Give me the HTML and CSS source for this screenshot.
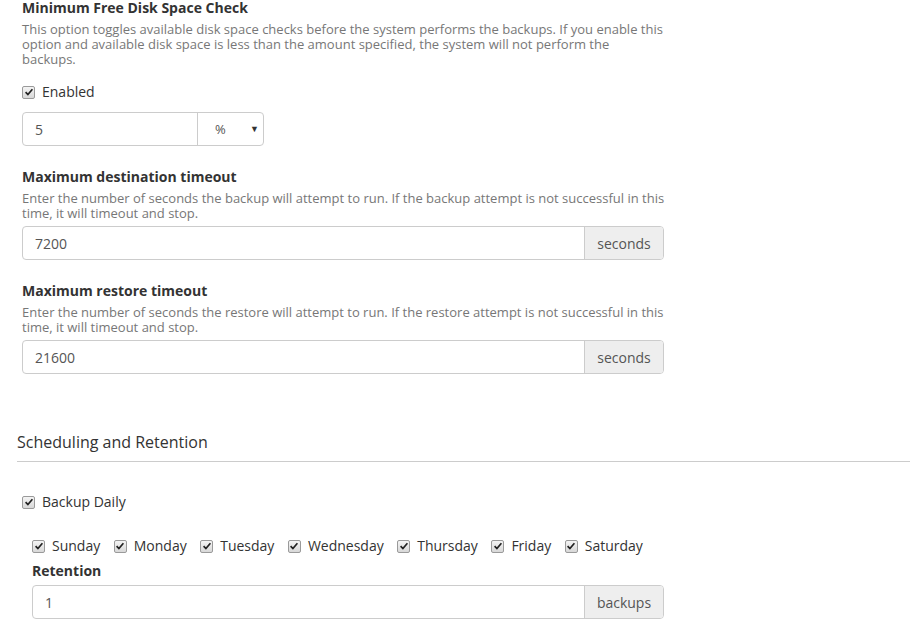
FILE: index.html
```html
<!DOCTYPE html>
<html>
<head>
<meta charset="utf-8">
<link rel="stylesheet" href="styles.css">
</head>
<body>
<div class="page">
  <div class="field">
    <div class="field-title">Minimum Free Disk Space Check</div>
    <div class="field-desc">This option toggles available disk space checks before the system performs the backups. If you enable this option and available disk space is less than the amount specified, the system will not perform the backups.</div>
    <label class="check check-enabled"><span class="box"><svg viewBox="0 0 12 12" width="12" height="12"><path d="M2.6 6.2 L4.9 8.6 L9.4 3.2" fill="none" stroke="#222" stroke-width="1.7"/></svg></span><span>Enabled</span></label>
    <div class="input-group small-group">
      <div class="input grow">5</div>
      <div class="select">%<span class="caret">&#9660;</span></div>
    </div>
  </div>

  <div class="field">
    <div class="field-title">Maximum destination timeout</div>
    <div class="field-desc">Enter the number of seconds the backup will attempt to run. If the backup attempt is not successful in this time, it will timeout and stop.</div>
    <div class="input-group">
      <div class="input grow">7200</div>
      <div class="addon">seconds</div>
    </div>
  </div>

  <div class="field">
    <div class="field-title">Maximum restore timeout</div>
    <div class="field-desc">Enter the number of seconds the restore will attempt to run. If the restore attempt is not successful in this time, it will timeout and stop.</div>
    <div class="input-group">
      <div class="input grow">21600</div>
      <div class="addon">seconds</div>
    </div>
  </div>

  <div class="section">
    <div class="section-title">Scheduling and Retention</div>
    <div class="section-body">
      <label class="check check-daily"><span class="box"><svg viewBox="0 0 12 12" width="12" height="12"><path d="M2.6 6.2 L4.9 8.6 L9.4 3.2" fill="none" stroke="#222" stroke-width="1.7"/></svg></span><span>Backup Daily</span></label>
      <div class="daily">
        <div class="days">
          <label class="check"><span class="box"><svg viewBox="0 0 12 12" width="12" height="12"><path d="M2.6 6.2 L4.9 8.6 L9.4 3.2" fill="none" stroke="#222" stroke-width="1.7"/></svg></span><span>Sunday</span></label>
          <label class="check"><span class="box"><svg viewBox="0 0 12 12" width="12" height="12"><path d="M2.6 6.2 L4.9 8.6 L9.4 3.2" fill="none" stroke="#222" stroke-width="1.7"/></svg></span><span>Monday</span></label>
          <label class="check"><span class="box"><svg viewBox="0 0 12 12" width="12" height="12"><path d="M2.6 6.2 L4.9 8.6 L9.4 3.2" fill="none" stroke="#222" stroke-width="1.7"/></svg></span><span>Tuesday</span></label>
          <label class="check"><span class="box"><svg viewBox="0 0 12 12" width="12" height="12"><path d="M2.6 6.2 L4.9 8.6 L9.4 3.2" fill="none" stroke="#222" stroke-width="1.7"/></svg></span><span>Wednesday</span></label>
          <label class="check"><span class="box"><svg viewBox="0 0 12 12" width="12" height="12"><path d="M2.6 6.2 L4.9 8.6 L9.4 3.2" fill="none" stroke="#222" stroke-width="1.7"/></svg></span><span>Thursday</span></label>
          <label class="check"><span class="box"><svg viewBox="0 0 12 12" width="12" height="12"><path d="M2.6 6.2 L4.9 8.6 L9.4 3.2" fill="none" stroke="#222" stroke-width="1.7"/></svg></span><span>Friday</span></label>
          <label class="check"><span class="box"><svg viewBox="0 0 12 12" width="12" height="12"><path d="M2.6 6.2 L4.9 8.6 L9.4 3.2" fill="none" stroke="#222" stroke-width="1.7"/></svg></span><span>Saturday</span></label>
        </div>
        <div class="sub-title">Retention</div>
        <div class="input-group">
          <div class="input grow">1</div>
          <div class="addon">backups</div>
        </div>
      </div>
    </div>
  </div>
</div>
</body>
</html>
```

FILE: styles.css
```css
html, body {
  margin: 0;
  padding: 0;
  background: #fff;
}
body {
  font-family: "Open Sans", "Liberation Sans", sans-serif;
  font-size: 14px;
  color: #333;
  overflow: hidden;
}
.page {
  padding-left: 22px;
}
.field {
  width: 642px;
  margin-bottom: 23px;
}
.field-title {
  font-weight: 700;
  font-size: 14px;
  line-height: 16px;
  color: #333;
}
.field-desc {
  margin-top: 6px;
  margin-right: -1px;
  font-size: 13px;
  line-height: 15px;
  color: #777;
}
.check {
  display: flex;
  align-items: center;
  height: 20px;
  line-height: 20px;
  font-size: 14px;
  color: #333;
}
.box {
  width: 11px;
  height: 11px;
  border: 1px solid #9a9a9a;
  border-radius: 2px;
  background: linear-gradient(#f4f4f4, #d8d8d8);
  margin-right: 7px;
  display: flex;
  align-items: center;
  justify-content: center;
  overflow: hidden;
  flex: none;
}
.box svg {
  display: block;
  flex: none;
}
.check-enabled {
  margin-top: 15px;
}
.input-group {
  display: flex;
  height: 34px;
  box-sizing: border-box;
  border: 1px solid #ccc;
  border-radius: 4px;
  margin-top: 10px;
  overflow: hidden;
}
.small-group {
  width: 242px;
}
.input {
  display: flex;
  align-items: center;
  padding-left: 12px;
  font-size: 14px;
  color: #555;
}
.grow {
  flex: 1;
}
.select {
  width: 66px;
  border-left: 1px solid #ccc;
  display: flex;
  align-items: center;
  padding-left: 17px;
  box-sizing: border-box;
  font-size: 13px;
  color: #555;
  position: relative;
}
.caret {
  position: absolute;
  right: 4px;
  top: 9px;
  font-size: 9px;
  color: #333;
}
.addon {
  width: 79px;
  box-sizing: border-box;
  background: #eee;
  border-left: 1px solid #ccc;
  display: flex;
  align-items: center;
  justify-content: center;
  font-size: 14px;
  color: #555;
}
.field .field-desc + .input-group {
  margin-top: 5px;
}
.section {
  margin-left: -5px;
  padding-top: 35px;
}
.section-title {
  font-size: 16px;
  line-height: 20px;
  color: #333;
  padding-bottom: 9px;
  border-bottom: 1px solid #ccc;
}
.section-body {
  padding-left: 5px;
}
.check-daily {
  margin-top: 30px;
}
.daily {
  padding-left: 10px;
  width: 632px;
  margin-top: 24px;
}
.days {
  display: flex;
  gap: 13.5px;
}
.sub-title {
  font-weight: 700;
  font-size: 14px;
  line-height: 16px;
  margin-top: 7px;
}
.daily .input-group {
  margin-top: 6px;
}
```
